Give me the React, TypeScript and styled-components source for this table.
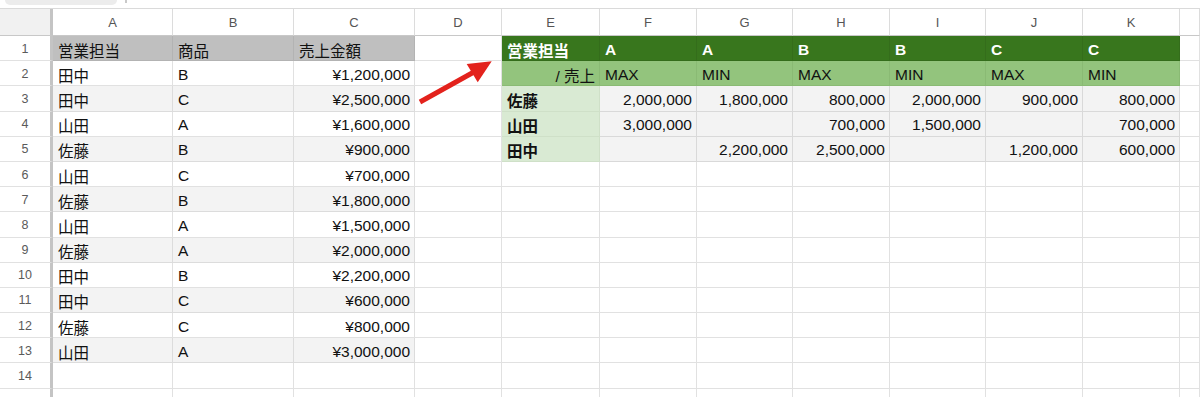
import styled, { createGlobalStyle } from "styled-components";

type Tone = "plain" | "zebra" | "title" | "dark" | "mid" | "light" | "value";

type CellData = {
  text: string;
  tone: Tone;
  right?: boolean;
  bold?: boolean;
};

const GlobalStyle = createGlobalStyle`
  html, body {
    margin: 0;
    padding: 0;
    background: #fff;
    overflow: hidden;
  }
  body {
    font-family: "Liberation Sans", "Noto Sans CJK JP", Arial, sans-serif;
  }
`;

const LETTERS = ["A", "B", "C", "D", "E", "F", "G", "H", "I", "J", "K", ""];

const sales: [string, string, string][] = [
  ["田中", "B", "¥1,200,000"],
  ["田中", "C", "¥2,500,000"],
  ["山田", "A", "¥1,600,000"],
  ["佐藤", "B", "¥900,000"],
  ["山田", "C", "¥700,000"],
  ["佐藤", "B", "¥1,800,000"],
  ["山田", "A", "¥1,500,000"],
  ["佐藤", "A", "¥2,000,000"],
  ["田中", "B", "¥2,200,000"],
  ["田中", "C", "¥600,000"],
  ["佐藤", "C", "¥800,000"],
  ["山田", "A", "¥3,000,000"],
];

const pivotHead = ["営業担当", "A", "A", "B", "B", "C", "C"];
const pivotStats = ["MAX", "MIN", "MAX", "MIN", "MAX", "MIN"];
const pivotRows: [string, string[]][] = [
  ["佐藤", ["2,000,000", "1,800,000", "800,000", "2,000,000", "900,000", "800,000"]],
  ["山田", ["3,000,000", "", "700,000", "1,500,000", "", "700,000"]],
  ["田中", ["", "2,200,000", "2,500,000", "", "1,200,000", "600,000"]],
];

// row 15 only peeks in at the bottom edge, its number is not visible
const ROW_COUNT = 15;
const LAST_NUMBERED = 14;

function buildRow(r: number): CellData[] {
  const cells: CellData[] = [];

  // A-C: source data
  if (r === 1) {
    ["営業担当", "商品", "売上金額"].forEach((t) => cells.push({ text: t, tone: "title" }));
  } else if (r <= 13) {
    const [who, item, amount] = sales[r - 2];
    const tone: Tone = r % 2 === 1 ? "zebra" : "plain";
    cells.push({ text: who, tone });
    cells.push({ text: item, tone });
    cells.push({ text: amount, tone, right: true });
  } else {
    for (let i = 0; i < 3; i++) cells.push({ text: "", tone: "plain" });
  }

  // D
  cells.push({ text: "", tone: "plain" });

  // E-K: pivot
  if (r === 1) {
    pivotHead.forEach((t) => cells.push({ text: t, tone: "dark", bold: true }));
  } else if (r === 2) {
    cells.push({ text: "/ 売上", tone: "mid", right: true });
    pivotStats.forEach((t) => cells.push({ text: t, tone: "mid" }));
  } else if (r <= 5) {
    const [who, values] = pivotRows[r - 3];
    cells.push({ text: who, tone: "light", bold: true });
    values.forEach((v) => cells.push({ text: v, tone: "value", right: true }));
  } else {
    for (let i = 0; i < 7; i++) cells.push({ text: "", tone: "plain" });
  }

  // trailing column
  cells.push({ text: "", tone: "plain" });
  return cells;
}

const toneBg: Record<Tone, string> = {
  plain: "#ffffff",
  zebra: "#f3f3f3",
  title: "#bfbfbf",
  dark: "#38761d",
  mid: "#93c47d",
  light: "#d9ead3",
  value: "#f3f3f3",
};

const toneLine: Record<Tone, string> = {
  plain: "#e1e1e1",
  zebra: "#dcdcdc",
  title: "#b3b3b3",
  dark: "#346d1b",
  mid: "#8aba74",
  light: "#cfe0c8",
  value: "#d9d9d9",
};

export default function App() {
  const rows = Array.from({ length: ROW_COUNT }, (_, i) => i + 1);

  return (
    <>
      <GlobalStyle />
      <Page>
        <TopBar>
          <TabStub />
          <TabMark />
        </TopBar>
        <Sheet>
          <Corner />
          {LETTERS.map((l, i) => (
            <ColHead key={"h" + i}>{l}</ColHead>
          ))}
          {rows.map((r) => [
            <RowNum key={"n" + r}>{r <= LAST_NUMBERED ? r : ""}</RowNum>,
            ...buildRow(r).map((c, i) => (
              <Cell key={r + "-" + i} $tone={c.tone} $right={c.right} $bold={c.bold}>
                {c.text}
              </Cell>
            )),
          ])}
          <Arrow viewBox="0 0 90 60" width="90" height="60">
            <line x1="7" y1="50" x2="60" y2="20.5" stroke="#e3221c" strokeWidth="5" />
            <polygon points="78.7,9.3 53.7,12 64.7,30.3" fill="#e3221c" />
          </Arrow>
        </Sheet>
      </Page>
    </>
  );
}

const Page = styled.div`
  width: 1200px;
  height: 397px;
  overflow: hidden;
  display: flex;
  flex-direction: column;
`;

const TopBar = styled.div`
  height: 8px;
  flex: none;
  display: flex;
  align-items: flex-start;
  gap: 8px;
  border-bottom: 1px solid #dadada;
`;

const TabStub = styled.div`
  margin-left: 5px;
  width: 112px;
  height: 5px;
  background: #ececec;
  border-radius: 0 0 7px 7px;
`;

const TabMark = styled.div`
  width: 2px;
  height: 3px;
  background: #c9c9c9;
`;

const Sheet = styled.div`
  position: relative;
  display: grid;
  grid-template-columns: 53px 120px 121px 121px 87px 98px 97px 96px 97px 96px 97px 97px 1fr;
  grid-template-rows: 27px;
  grid-auto-rows: 25.2px;
  font-size: 15.5px;
  color: #111;
`;

const Corner = styled.div`
  background: #f1f1f1;
  border-right: 3px solid #c4c4c4;
  border-bottom: 1px solid #c8c8c8;
`;

const ColHead = styled.div`
  display: flex;
  align-items: center;
  justify-content: center;
  font-size: 13px;
  color: #555;
  background: #fff;
  border-right: 1px solid #dcdcdc;
  border-bottom: 1px solid #c8c8c8;
`;

const RowNum = styled.div`
  display: flex;
  align-items: center;
  justify-content: center;
  padding-top: 1px;
  font-size: 12.5px;
  color: #5a5a5a;
  background: #fff;
  border-right: 3px solid #c4c4c4;
  border-bottom: 1px solid #e1e1e1;
`;

const Cell = styled.div<{ $tone: Tone; $right?: boolean; $bold?: boolean }>`
  display: flex;
  align-items: center;
  justify-content: ${({ $right }) => ($right ? "flex-end" : "flex-start")};
  padding: 3px 4px 0 5px;
  white-space: nowrap;
  overflow: hidden;
  background: ${({ $tone }) => toneBg[$tone]};
  color: ${({ $tone }) => ($tone === "dark" ? "#fff" : "#111")};
  font-weight: ${({ $bold }) => ($bold ? 700 : 400)};
  border-right: 1px solid ${({ $tone }) => toneLine[$tone]};
  border-bottom: 1px solid ${({ $tone }) => toneLine[$tone]};
`;

const Arrow = styled.svg`
  position: absolute;
  left: 413px;
  top: 43px;
  pointer-events: none;
`;
